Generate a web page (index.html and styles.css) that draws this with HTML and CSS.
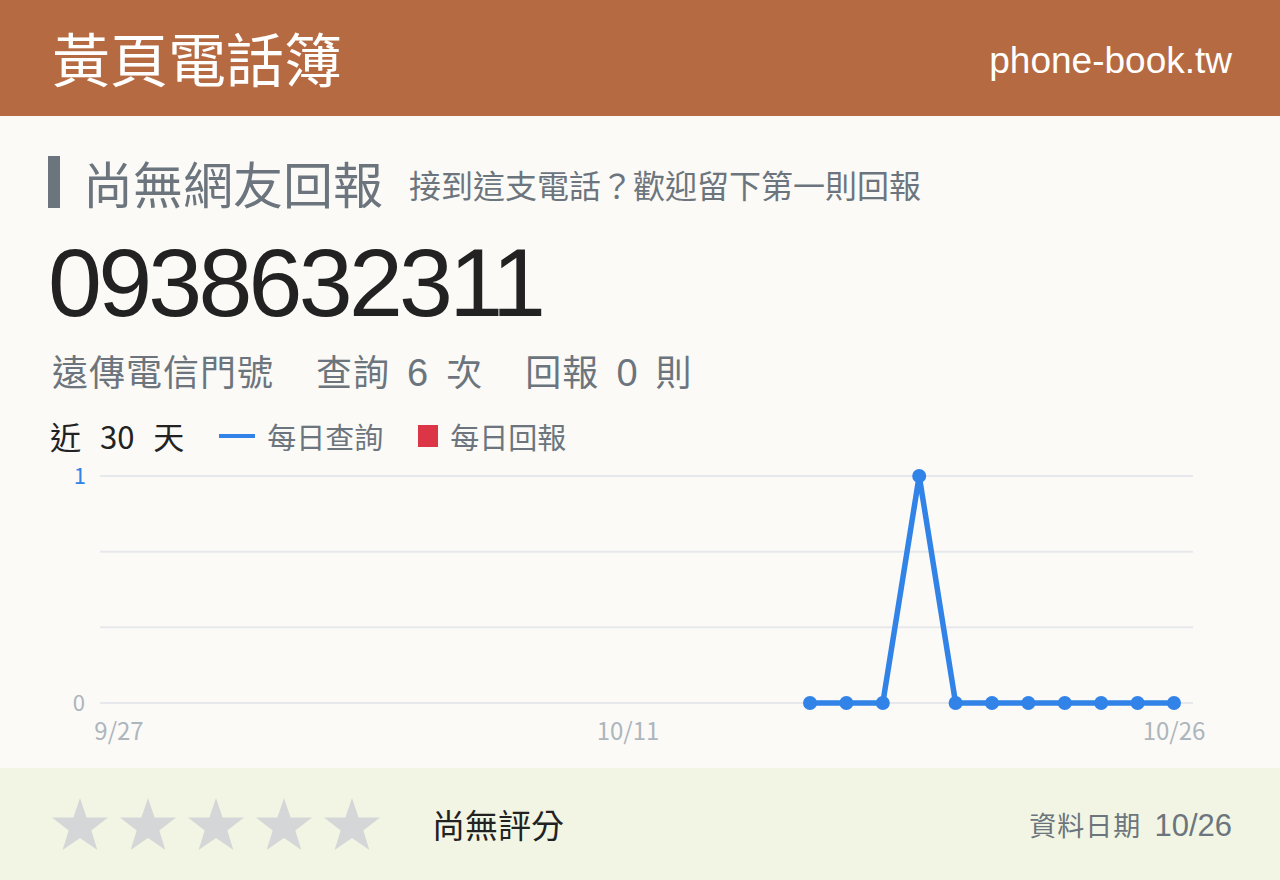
FILE: index.html
```html
<!DOCTYPE html>
<html lang="zh-Hant">
<head>
<meta charset="UTF-8">
<meta name="viewport" content="width=device-width, initial-scale=1.0">
<title>0938632311 - 黃頁電話簿</title>
<link rel="stylesheet" href="styles.css">
</head>
<body>

<!-- Top bar -->
<header class="topbar">
  <div class="brand">黃頁電話簿</div>
  <div class="domain">phone-book.tw</div>
</header>

<main class="content">
  <div class="report-head">
    <h2>尚無網友回報</h2>
    <span class="hint">接到這支電話？歡迎留下第一則回報</span>
  </div>

  <div class="number">0938632311</div>

  <div class="stats">
    <span class="stat">遠傳電信門號</span>
    <span class="stat">查詢 <b class="num">6</b> 次</span>
    <span class="stat">回報 <b class="num">0</b> 則</span>
  </div>

  <div class="legend">
    <span class="period">近 <span class="digits">30</span> 天</span>
    <span class="key"><i class="swatch line"></i>每日查詢</span>
    <span class="key"><i class="swatch box"></i>每日回報</span>
  </div>

  <!-- Daily lookups, last 30 days -->
  <svg class="chart" width="1184" height="310" viewBox="0 0 1184 310">
    <g transform="translate(0,10)">
      <g class="grid">
        <line x1="52" y1="16" x2="1145" y2="16"/>
        <line x1="52" y1="91.7" x2="1145" y2="91.7"/>
        <line x1="52" y1="167.3" x2="1145" y2="167.3"/>
        <line x1="52" y1="243" x2="1145" y2="243"/>
      </g>
      <text class="ylab blue" x="38" y="24" text-anchor="end">1</text>
      <text class="ylab" x="37" y="251" text-anchor="end">0</text>
      <text class="xlab" x="71" y="280" text-anchor="middle">9/27</text>
      <text class="xlab" x="580" y="280" text-anchor="middle">10/11</text>
      <text class="xlab" x="1126" y="280" text-anchor="middle">10/26</text>
      <polyline class="series" points="762,243 798.4,243 834.8,243 871.2,16 907.6,243 944,243 980.4,243 1016.8,243 1053.2,243 1089.6,243 1126,243"/>
      <g class="dots">
        <circle cx="762" cy="243" r="7"/>
        <circle cx="798.4" cy="243" r="7"/>
        <circle cx="834.8" cy="243" r="7"/>
        <circle cx="871.2" cy="16" r="7"/>
        <circle cx="907.6" cy="243" r="7"/>
        <circle cx="944" cy="243" r="7"/>
        <circle cx="980.4" cy="243" r="7"/>
        <circle cx="1016.8" cy="243" r="7"/>
        <circle cx="1053.2" cy="243" r="7"/>
        <circle cx="1089.6" cy="243" r="7"/>
        <circle cx="1126" cy="243" r="7"/>
      </g>
    </g>
  </svg>
</main>

<footer class="rating">
  <div class="stars">
    <svg class="star" viewBox="0 0 56 52"><polygon points="28,0 34.6,19.5 56,19.6 39.3,32.6 45.4,52 28,40 10.6,52 16.7,32.6 0,19.6 21.4,19.5"/></svg>
    <svg class="star" viewBox="0 0 56 52"><polygon points="28,0 34.6,19.5 56,19.6 39.3,32.6 45.4,52 28,40 10.6,52 16.7,32.6 0,19.6 21.4,19.5"/></svg>
    <svg class="star" viewBox="0 0 56 52"><polygon points="28,0 34.6,19.5 56,19.6 39.3,32.6 45.4,52 28,40 10.6,52 16.7,32.6 0,19.6 21.4,19.5"/></svg>
    <svg class="star" viewBox="0 0 56 52"><polygon points="28,0 34.6,19.5 56,19.6 39.3,32.6 45.4,52 28,40 10.6,52 16.7,32.6 0,19.6 21.4,19.5"/></svg>
    <svg class="star" viewBox="0 0 56 52"><polygon points="28,0 34.6,19.5 56,19.6 39.3,32.6 45.4,52 28,40 10.6,52 16.7,32.6 0,19.6 21.4,19.5"/></svg>
  </div>
  <div class="score">尚無評分</div>
  <div class="updated">資料日期 <span class="date">10/26</span></div>
</footer>

</body>
</html>
```

FILE: styles.css
```css
:root { --brown:#b56a41; --gray:#6c757d; --light:#adb5bd; --blue:#3183e8; --red:#dc3545; --paper:#fbfaf7; --green:#f2f5e3; }
*{box-sizing:border-box;}
body{margin:0;width:1280px;height:880px;overflow:hidden;background:var(--paper);color:#222;font-family:"Liberation Sans","Noto Sans CJK TC",sans-serif;}

/* header */
.topbar{height:116px;background:var(--brown);color:#fff;display:flex;align-items:center;justify-content:space-between;padding:0 48px 0 52px;}
.brand{font-family:"Noto Sans CJK TC",sans-serif;font-size:58px;line-height:1;margin-top:-2px;}
.domain{font-size:37px;line-height:1;margin-top:4px;}

/* body */
.content{padding:40px 48px 0;height:652px;}
.report-head{display:flex;align-items:center;height:52px;}
.report-head h2{margin:0;border-left:12px solid var(--gray);padding-left:23px;font-family:"Noto Sans CJK TC",sans-serif;font-weight:400;font-size:50px;line-height:52px;color:var(--gray);}
.hint{margin-left:26px;font-family:"Noto Sans CJK TC",sans-serif;font-size:32px;color:var(--gray);margin-top:4px;}

.number{font-size:97px;line-height:1;letter-spacing:-3.8px;margin:26px 0 0 0;color:#222;}

.stats{display:flex;gap:42px;margin:18px 0 0 4px;font-family:"Noto Sans CJK TC",sans-serif;font-size:36px;letter-spacing:1px;color:var(--gray);line-height:1.2;}
.stats .num{font-family:"Liberation Sans",sans-serif;font-weight:400;font-size:38px;margin:0 8px;}

.legend{display:flex;align-items:center;gap:35px;margin-top:21px;height:36px;margin-left:2px;}
.period{font-family:"Noto Sans CJK TC",sans-serif;font-size:31px;color:#222;}
.period .digits{margin:0 12px;}
.key{display:flex;align-items:center;gap:12px;font-family:"Noto Sans CJK TC",sans-serif;font-size:29px;color:var(--gray);}
.swatch{display:inline-block;}
.swatch.line{width:36px;height:4px;background:var(--blue);}
.swatch.box{width:20px;height:22px;background:var(--red);}

.chart{display:block;margin-top:-4px;font-family:"Noto Sans CJK TC",sans-serif;}
.grid line{stroke:#e6e8ec;stroke-width:2;}
.ylab{font-size:22px;fill:var(--light);}
.ylab.blue{fill:var(--blue);}
.xlab{font-size:24px;fill:var(--light);}
.series{fill:none;stroke:var(--blue);stroke-width:5.5;stroke-linejoin:round;}
.dots circle{fill:var(--blue);}

/* rating strip */
.rating{height:112px;background:var(--green);display:flex;align-items:center;padding:0 48px 0 52px;}
.stars{display:flex;gap:12px;}
.star{width:56px;height:52px;display:block;}
.star polygon{fill:#d5d6d8;}
.score{margin-left:52px;font-family:"Noto Sans CJK TC",sans-serif;font-size:33px;color:#222;}
.updated{margin-left:auto;font-family:"Noto Sans CJK TC",sans-serif;font-size:27px;color:var(--gray);letter-spacing:1px;}
.updated .date{font-family:"Liberation Sans",sans-serif;font-size:31px;letter-spacing:0;margin-left:6px;}
```
